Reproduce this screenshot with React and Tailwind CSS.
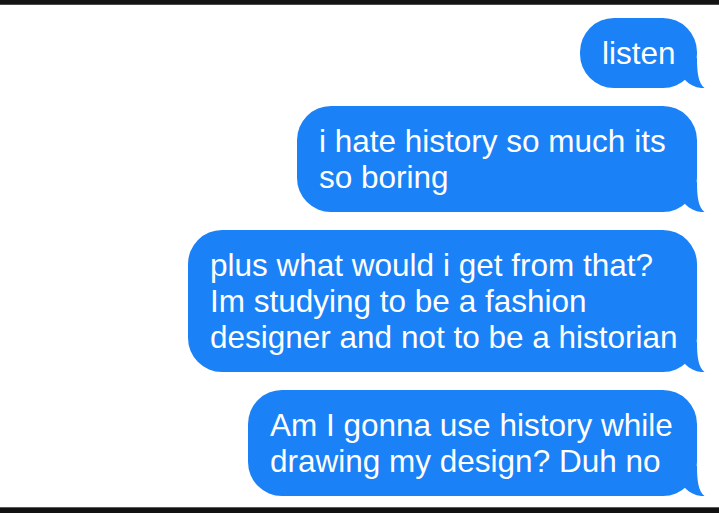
import React from 'react';

const messages = [
  { width: 'w-[117px]', lines: ['listen'] },
  { width: 'w-[400px]', lines: ['i hate history so much its', 'so boring'] },
  {
    width: 'w-[509px]',
    lines: ['plus what would i get from that?', 'Im studying to be a fashion', 'designer and not to be a historian'],
  },
  { width: 'w-[449px]', lines: ['Am I gonna use history while', 'drawing my design? Duh no'] },
];

// little curl at the bottom-right corner of a sent bubble
const Tail = () => (
  <svg
    className="absolute bottom-0 right-[-8px]"
    width="28"
    height="30"
    viewBox="0 0 28 30"
  >
    <path d="M8 0 L20 0 C20 15 21.5 25.5 27.5 30 C20 30.5 13.5 27.5 8 22 Z" fill="#1b81f6" />
  </svg>
);

const Bubble = ({ width, lines }) => (
  <div
    className={`relative ${width} rounded-[34px] bg-[#1b81f6] py-[17px] pl-[22px] text-[31.5px] leading-[36px] text-white whitespace-nowrap`}
  >
    {lines.map((line, i) => (
      <div key={i}>{line}</div>
    ))}
    <Tail />
  </div>
);

export default function App() {
  return (
    <div
      className="flex h-[513px] w-[719px] flex-col overflow-hidden bg-white"
      style={{ fontFamily: '"Liberation Sans", Arial, sans-serif' }}
    >
      <div className="h-[5px] border-b border-[#4a4a4a] bg-[#141414]" />
      <div className="flex flex-1 flex-col items-end gap-[18px] pr-[22px] pt-[13px]">
        {messages.map((m, i) => (
          <Bubble key={i} width={m.width} lines={m.lines} />
        ))}
      </div>
      <div className="h-[6px] border-t border-[#5a5a5a] bg-[#111111]" />
    </div>
  );
}
